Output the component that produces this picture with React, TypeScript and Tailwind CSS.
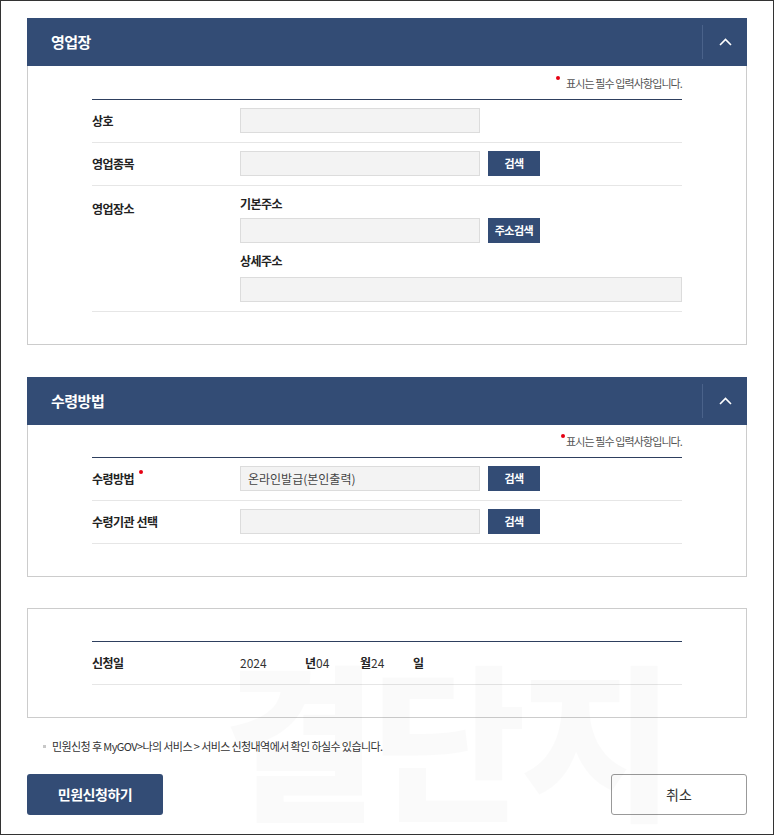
import React from "react";

const font = { fontFamily: '"Noto Sans CJK KR", "Noto Sans", sans-serif' };

function SectionHeader({ title }: { title: string }) {
  return (
    <div className="flex h-[48px] items-stretch bg-[#334c75]">
      <div className="flex flex-1 items-center pl-[24px] text-[15px] font-bold tracking-[-0.5px] text-white">
        {title}
      </div>
      <div className="flex items-center py-[7px]">
        <div className="h-full w-px bg-[#4a628a]" />
        <div className="flex w-[44px] items-center justify-center">
          <svg width="13" height="8" viewBox="0 0 13 8" fill="none">
            <polyline
              points="1,7 6.5,1.5 12,7"
              stroke="white"
              strokeWidth="1.6"
              strokeLinejoin="miter"
            />
          </svg>
        </div>
      </div>
    </div>
  );
}

function RequiredNote({ tight }: { tight?: boolean }) {
  return (
    <div className="flex h-[14px] items-center justify-end text-[11px] tracking-[-0.9px] text-[#555]">
      <span
        className={`relative -top-[5px] h-[4px] w-[4px] rounded-full bg-[#e60012] ${
          tight ? "mr-[1px]" : "mr-[6px]"
        }`}
      />
      표시는 필수 입력사항입니다.
    </div>
  );
}

function Input({ value, wide }: { value?: string; wide?: boolean }) {
  return (
    <div
      className={`flex h-[25px] items-center border border-[#dcdcdc] bg-[#f3f3f3] px-[7px] text-[12px] text-[#444] ${
        wide ? "w-[442px]" : "w-[240px]"
      }`}
    >
      {value}
    </div>
  );
}

function SmallButton({ label }: { label: string }) {
  return (
    <div className="ml-[8px] flex h-[25px] w-[52px] items-center justify-center bg-[#334c75] text-[11px] font-bold tracking-[-0.5px] text-white">
      {label}
    </div>
  );
}

function Row({
  label,
  required,
  children,
}: {
  label: string;
  required?: boolean;
  children: React.ReactNode;
}) {
  return (
    <div className="flex items-center border-b border-[#e6e6e6] pb-[9px] pt-[8px]">
      <div className="w-[148px] text-[12px] font-bold tracking-[-0.5px] text-[#222]">
        {label}
        {required && (
          <span className="relative -top-[10px] ml-[5px] inline-block h-[4px] w-[4px] rounded-full bg-[#e60012]" />
        )}
      </div>
      <div className="flex items-center">{children}</div>
    </div>
  );
}

export default function App() {
  return (
    <div
      style={font}
      className="relative h-[835px] w-[774px] overflow-hidden border border-[#333] bg-white pl-[26px] pt-[17px]"
    >
      {/* section 1 */}
      <div className="w-[720px]">
        <SectionHeader title="영업장" />
        <div className="border border-t-0 border-[#cccccc] px-[64px] pb-[32px] pt-[10px]">
          <RequiredNote />
          <div className="mt-[9px] border-t border-[#2e3f5e]">
            <Row label="상호">
              <Input />
            </Row>
            <Row label="영업종목">
              <Input />
              <SmallButton label="검색" />
            </Row>
            <div className="flex border-b border-[#e6e6e6] pb-[9px] pt-[11px]">
              <div className="w-[148px] pt-[3px] text-[12px] font-bold tracking-[-0.5px] text-[#222]">
                영업장소
              </div>
              <div className="flex flex-col">
                <div className="h-[14px] text-[12px] font-bold leading-[14px] tracking-[-0.5px] text-[#222]">
                  기본주소
                </div>
                <div className="mt-[7px] flex items-center">
                  <Input />
                  <SmallButton label="주소검색" />
                </div>
                <div className="mt-[11px] h-[14px] text-[12px] font-bold leading-[14px] tracking-[-0.5px] text-[#222]">
                  상세주소
                </div>
                <div className="mt-[9px]">
                  <Input wide />
                </div>
              </div>
            </div>
          </div>
        </div>
      </div>

      {/* section 2 */}
      <div className="mt-[32px] w-[720px]">
        <SectionHeader title="수령방법" />
        <div className="border border-t-0 border-[#cccccc] px-[64px] pb-[32px] pt-[9px]">
          <RequiredNote tight />
          <div className="mt-[9px] border-t border-[#2e3f5e]">
            <Row label="수령방법" required>
              <Input value="온라인발급(본인출력)" />
              <SmallButton label="검색" />
            </Row>
            <Row label="수령기관 선택">
              <Input />
              <SmallButton label="검색" />
            </Row>
          </div>
        </div>
      </div>

      {/* section 3 */}
      <div className="mt-[31px] w-[720px] border border-[#cccccc] px-[64px] pb-[32px] pt-[32px]">
        <div className="border-t border-[#2e3f5e]">
          <div className="flex h-[43px] items-center border-b border-[#e6e6e6] text-[12px] text-[#333]">
            <div className="w-[148px] font-bold tracking-[-0.5px] text-[#222]">
              신청일
            </div>
            <span className="w-[65px]">2024</span>
            <span className="w-[55px]">
              <b className="font-bold text-[#222]">년</b>04
            </span>
            <span className="w-[53px]">
              <b className="font-bold text-[#222]">월</b>24
            </span>
            <b className="font-bold text-[#222]">일</b>
          </div>
        </div>
      </div>

      <div className="mt-[20px] flex items-center pl-[16px] text-[11px] tracking-[-0.6px] text-[#333]">
        <span className="mr-[6px] h-[3px] w-[3px] bg-[#c8c8c8]" />
        민원신청 후 MyGOV&gt;나의 서비스 &gt; 서비스 신청내역에서 확인 하실수 있습니다.
      </div>

      <div className="mt-[19px] flex w-[720px] justify-between">
        <div className="flex h-[41px] w-[136px] items-center justify-center rounded-[3px] bg-[#334c75] text-[14px] font-bold tracking-[-0.5px] text-white">
          민원신청하기
        </div>
        <div className="flex h-[41px] w-[136px] items-center justify-center rounded-[3px] border border-[#999] bg-white text-[14px] text-[#333]">
          취소
        </div>
      </div>

      {/* watermark */}
      <div className="pointer-events-none absolute left-[222px] top-[650px] select-none text-[168px] font-black leading-none tracking-[-6px] text-[rgba(0,0,0,0.018)]">
        결단지
      </div>
    </div>
  );
}
